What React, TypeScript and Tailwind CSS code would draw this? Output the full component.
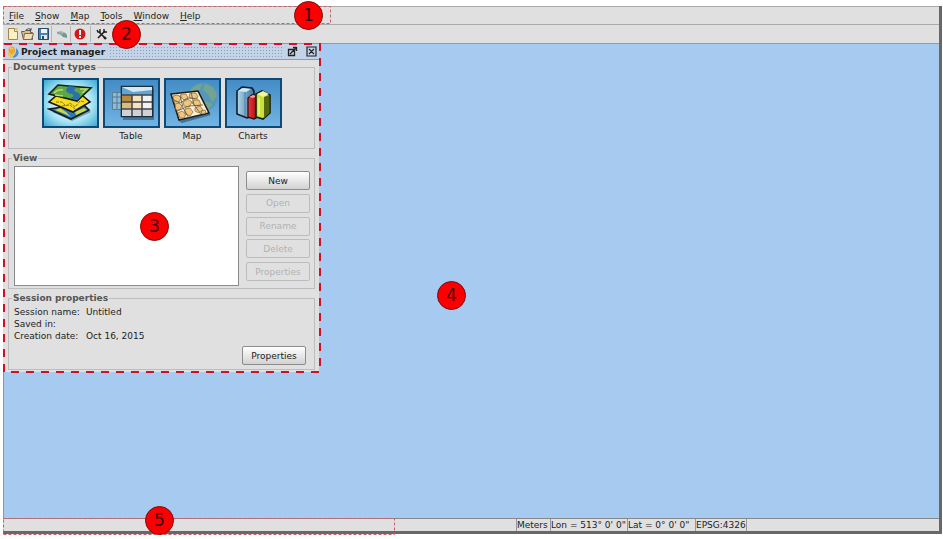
import React from 'react';

const menus = ['File', 'Show', 'Map', 'Tools', 'Window', 'Help'];

const viewActions = [
    { label: 'New', enabled: true },
    { label: 'Open', enabled: false },
    { label: 'Rename', enabled: false },
    { label: 'Delete', enabled: false },
    { label: 'Properties', enabled: false },
];

const Marker = ({ n, className }: { n: number; className: string }) => (
    <span className={`absolute z-20 flex size-[29px] items-center justify-center rounded-full border border-[#7a0c0c] bg-[#fb0000] text-[17px] leading-none text-[#3a0505] ${className}`}>
        {n}
    </span>
);

const DashedOutline = ({ thick = false }: { thick?: boolean }) => (
    <svg className="pointer-events-none absolute inset-0 z-10 h-full w-full overflow-visible" aria-hidden="true">
        <rect
            x={thick ? 1 : 0.5}
            y={thick ? 0 : 0.5}
            width="100%"
            height="100%"
            fill="none"
            stroke={thick ? '#d01028' : '#c8606a'}
            strokeWidth={thick ? 2 : 1}
            strokeDasharray={thick ? '8 7' : '3 2'}
        />
    </svg>
);

const NewIcon = () => (
    <svg width="12" height="12" viewBox="0 0 12 12">
        <path d="M1.500 .5h6l3 3v8h-9z" fill="#fdf0c4" stroke="#a08648" />
        <path d="M7.500 .5v3h3" fill="#fff" stroke="#a08648" />
        <path d="M8 0h3v2H8z" fill="#f5c64a" />
    </svg>
);

const OpenIcon = () => (
    <svg width="13" height="12" viewBox="0 0 13 12">
        <path d="M.5 3.500h3l1-1h5v2h2v7h-9z" fill="#d9bd92" stroke="#6f5c45" />
        <path d="M3.500 5.500h9l-2 6h-8z" fill="#f3ddb4" stroke="#7d6a50" />
        <path d="M5 2q3-3 5 0M10 0v2.500H8" fill="none" stroke="#3f4d5e" />
    </svg>
);

const SaveIcon = () => (
    <svg width="12" height="12" viewBox="0 0 12 12">
        <path d="M1.500 .5h10v11h-10z" fill="#4583ad" stroke="#27496c" />
        <path d="M4 1h6v4H4z" fill="#eef3f8" />
        <path d="M4 7h6v4H4z" fill="#e4e8ec" />
        <path d="M5 8h2v3H5z" fill="#27496c" />
    </svg>
);

const LinkIcon = () => (
    <svg width="12" height="12" viewBox="0 0 12 12">
        <path d="M1 4l4-1 5 2-1 3-4-1-4-1z" fill="#a3b6b4" />
        <path d="M5 7l4-2 2 2v3L7 9z" fill="#6f9a89" />
        <path d="M1 4l4 2 5 0" fill="none" stroke="#8098a0" />
    </svg>
);

const AlertIcon = () => (
    <svg width="12" height="12" viewBox="0 0 12 12">
        <circle cx="6" cy="6" r="5.500" fill="#d41818" />
        <path d="M5 2h2v5H5zM5 8h2v2H5z" fill="#fff" />
    </svg>
);

const ToolsIcon = () => (
    <svg width="12" height="12" viewBox="0 0 12 12" fill="none" stroke="#1c1c1c">
        <path d="M3 4l6 6M9 3L2 10" strokeWidth="1.600" />
        <path d="M1 2l1 2h2V1M8 1v3h3" strokeWidth="1.400" />
        <path d="M8 9l2 2" strokeWidth="2.400" />
    </svg>
);

const LogoIcon = () => (
    <svg width="13" height="13" viewBox="0 0 13 13">
        <path d="M2 3q4-4 6 1 1 4-3 6Q0 8 2 3z" fill="#f4a62a" />
        <path d="M9 3q4 3 2 7-3 4-6 2 5-3 4-9z" fill="#4b94d0" />
        <path d="M1 7q2 4 6 2-1 4-4 3T1 7z" fill="#f6c638" />
        <path d="M3 4q2-2 3 0" fill="none" stroke="#fbd77c" />
    </svg>
);

const ViewIcon = () => (
    <svg width="46" height="38" viewBox="0 0 46 38">
        <path d="M5 28l20 9 19-9-4-3z" fill="#0d3442" opacity=".4" />
        <path d="M2 25l22 10 18-9-6-6z" fill="#2878bf" stroke="#111c24" strokeWidth="1.600" />
        <path d="M8 26l5-2 6 4 5 5-6-3zM28 28l9-4 3 2-11 5z" fill="#d2d83c" />
        <path d="M2 18l24 10 17-10-7-6-26-1z" fill="#f7de20" stroke="#17170f" strokeWidth="1.600" />
        <path d="M9 18l6 0 4 4 4-3 5 4 5-6 5 1M15 22l8-1 5 4" fill="none" stroke="#8f7618" strokeDasharray="3 1" />
        <path d="M2 10L11 1l33 3-14 13z" fill="#5ba845" stroke="#122015" strokeWidth="1.600" />
        <path d="M22 2l8 1q-5 3-1 5 6 1 3 7l-3 1-6-2q6-2 2-4-10-2-3-8z" fill="#2a6fae" />
        <path d="M7 9q4-4 9-3M8 11l8 1M33 5l7 0-5 4" fill="none" stroke="#c3d66c" strokeWidth="1.500" />
    </svg>
);

const TableIcon = () => (
    <svg width="45" height="38" viewBox="0 0 45 38">
        <path d="M3.500 8.500h14v17h-14z" fill="#8ebbd5" stroke="#587e98" />
        <path d="M3 13h14M3 19h14M8 8v17" stroke="#537993" />
        <path d="M14 5h31v31H14z" fill="#18324a" opacity=".45" />
        <path d="M12.500 2.500h31v30h-31z" fill="#f2f2f2" stroke="#1e2c38" strokeWidth="1.600" />
        <path d="M13 3h30v8H13z" fill="#5fa6d2" />
        <path d="M13 3h30v3L24 8z" fill="#d4e9f3" />
        <path d="M13 11h10v7H13z" fill="#b88c3c" />
        <path d="M13 18h10v7H13z" fill="#d8bd7b" />
        <path d="M23 11h10v14H23z" fill="#f3e4bc" />
        <path d="M13 25h30v7H13z" fill="#cfd0d8" />
        <path d="M13 11h30M13 18h30M13 25h30M23 11v21M33 11v21" stroke="#45424a" strokeWidth="1.500" />
    </svg>
);

const MapIcon = () => (
    <svg width="51" height="42" viewBox="0 0 51 42">
        <circle cx="36" cy="15" r="14.500" fill="#5597bf" />
        <path d="M23 8q6-7 12-6l-2 6-6 3zM38 2q10 2 12 12l-5 6-4-8-5-4zM38 19l8 3-5 6-4-3z" fill="#73a48f" />
        <path d="M12 39l30-8 2 2-29 8z" fill="#12374d" opacity=".5" />
        <path d="M4 12l27-3 11 22-30 7z" fill="#fbf0d6" stroke="#211c14" strokeWidth="1.600" />
        <g fill="#efc67c" stroke="#8c7043" strokeWidth=".8">
            <path d="M6 14l5-1 3 3-2 4-5 0zM14 12l5 0 2 4-4 2-3-3zM23 11l6 0 2 4-4 2-5-2zM8 22l4-1 3 3-2 4-4 0zM16 20l5-3 4 3-3 5-5-1zM27 18l5 0 2 5-5 1-4-3zM11 31l4-2 4 3-2 4-4 0zM18 27l5-1 3 4-3 4-5-2zM28 26l5-2 3 4-4 3-4-2zM34 29l4-1 1 3-4 1z" />
        </g>
        <path d="M5 17l8 4 8-5 10 1M13 13l3 13 6 10M10 29l12-5 14-1M24 10l3 13 7 9" fill="none" stroke="#5f5340" strokeWidth=".8" />
    </svg>
);

const ChartsIcon = () => (
    <svg width="36" height="36" viewBox="0 0 36 36">
        <defs>
            <linearGradient id="steel">
                <stop offset="0" stopColor="#b4d6ea" />
                <stop offset="1" stopColor="#38729f" />
            </linearGradient>
            <linearGradient id="ruby">
                <stop offset="0" stopColor="#ef3a3a" />
                <stop offset="1" stopColor="#930a10" />
            </linearGradient>
        </defs>
        <path d="M2 6l5-4 10 1 2 3v25l-7 2-10-4z" fill="url(#steel)" stroke="#101c28" strokeWidth="1.600" />
        <path d="M3 6l5-3 8 1-5 3z" fill="#d3e8f3" />
        <path d="M10 7v24" stroke="#4e86ae" />
        <path d="M13 13l4-3 6 1v21l-4 2-6-2z" fill="url(#ruby)" stroke="#2c0507" strokeWidth="1.200" />
        <path d="M14 12l4-2 4 1-4 2z" fill="#f4a09a" />
        <path d="M21 9l6-3 8 4v18l-7 6-7-2z" fill="#c9e233" stroke="#171d08" strokeWidth="1.600" />
        <path d="M29 12l5-2v18l-5 5z" fill="#56660f" />
        <path d="M22 9l6-3 6 3-6 3z" fill="#eff5a4" />
        <path d="M24 13v17" stroke="#e4f27e" strokeWidth="2" />
    </svg>
);

const documentTypes = [
    { label: 'View', icon: <ViewIcon />, selected: true },
    { label: 'Table', icon: <TableIcon />, selected: false },
    { label: 'Map', icon: <MapIcon />, selected: false },
    { label: 'Charts', icon: <ChartsIcon />, selected: false },
];

const PushButton = ({ label, enabled = true }: { label: string; enabled?: boolean }) => (
    <button
        disabled={!enabled}
        className="h-[19px] w-16 rounded-[2px] border border-[#8c8c8c] bg-linear-to-b from-white to-[#d2d2d2] text-[9px] leading-3 text-[#222] disabled:border-[#bcbcbc] disabled:bg-[#e0e0e0] disabled:bg-none disabled:text-[#b2b2b2]"
    >
        {label}
    </button>
);

const Group = ({ title, children }: { title: string; children: React.ReactNode }) => (
    <fieldset className="border border-[#bdbdbd]">
        <legend className="ml-[3px] px-px text-[9px] leading-3 font-bold text-[#555]">{title}</legend>
        {children}
    </fieldset>
);

const ProjectManager = () => (
    <section className="relative w-[316px] bg-[#e0e0e0] pr-1 pb-[2px] pl-[5px]">
        <DashedOutline thick />
        <header className="-mr-1 -ml-[5px] flex h-4 items-center border-b border-[#9a9a9a] bg-[#c3d4e8] pr-[2px] pl-1">
            <LogoIcon />
            <h1 className="ml-px text-[9px] leading-3 font-bold text-[#1c1c1c]">Project manager</h1>
            <div className="mx-1 h-[11px] flex-1 bg-[radial-gradient(#8da0b5_1px,transparent_1px)] bg-size-[3px_3px]" />
            <button aria-label="Maximize" className="mr-2">
                <svg width="11" height="11" viewBox="0 0 11 11" fill="none" stroke="#222">
                    <path d="M1.500 3.500h6v6h-6zM3 8l6-6M6 1.500h3.500V5" strokeWidth="1.300" />
                </svg>
            </button>
            <button aria-label="Close">
                <svg width="11" height="11" viewBox="0 0 11 11" fill="none" stroke="#222">
                    <path d="M1 1h9v9H1zM3 3l5 5M8 3L3 8" strokeWidth="1.200" />
                </svg>
            </button>
        </header>

        <div className="flex flex-col gap-[3px] pt-px">
            <Group title="Document types">
                <div className="flex justify-center gap-1 pt-[5px] pb-[6px]">
                    {documentTypes.map((doc) => (
                        <button key={doc.label} className="flex flex-col items-center gap-[2px] text-[9px] leading-3 text-[#222]">
                            <span
                                className={`flex h-[50px] w-[57px] items-center justify-center border-2 border-[#0e4a78] ${
                                    doc.selected
                                        ? 'bg-[radial-gradient(#effcff_30%,#a4e2f4_60%,#38a8d4)]'
                                        : 'bg-linear-to-b from-[#438cc5] to-[#72b4e4]'
                                }`}
                            >
                                {doc.icon}
                            </span>
                            {doc.label}
                        </button>
                    ))}
                </div>
            </Group>

            <Group title="View">
                <div className="flex gap-[7px] pt-[2px] pr-1 pb-[2px] pl-[5px]">
                    <select multiple aria-label="Views" className="h-[120px] flex-1 appearance-none border border-[#8a8a8a] bg-white" />
                    <div className="flex flex-col justify-between py-[5px]">
                        {viewActions.map((action) => (
                            <PushButton key={action.label} label={action.label} enabled={action.enabled} />
                        ))}
                    </div>
                </div>
            </Group>

            <Group title="Session properties">
                <div className="px-[5px] pt-[2px] pb-1">
                    <dl className="grid grid-cols-[72px_1fr] text-[9px] leading-3 text-[#222]">
                        <dt>Session name:</dt>
                        <dd>Untitled</dd>
                        <dt>Saved in:</dt>
                        <dd></dd>
                        <dt>Creation date:</dt>
                        <dd>Oct 16, 2015</dd>
                    </dl>
                    <div className="mt-1 flex justify-end pr-[3px]">
                        <PushButton label="Properties" />
                    </div>
                </div>
            </Group>
        </div>
    </section>
);

const toolButton = 'flex h-4 w-[15px] items-center justify-center';

const App = () => {
    return (
        <div className="flex h-screen flex-col bg-white pt-[6px] pr-[1px] pb-[5px] pl-[3px] font-['DejaVu_Sans',sans-serif]">
            <div className="flex min-h-0 flex-1 flex-col border-r-[3px] border-b-[3px] border-[#686868] bg-[#e0e0e0]">
                <nav className="relative flex h-[19px] items-center gap-[11px] border-t border-b border-[#aaa] pl-[6px] text-[9px] leading-3 text-[#222]">
                    {menus.map((menu) => (
                        <button key={menu}>
                            <span className="underline">{menu[0]}</span>
                            {menu.slice(1)}
                        </button>
                    ))}
                    <div className="absolute -top-px left-0 h-[17px] w-[327px]">
                        <DashedOutline />
                    </div>
                    <Marker n={1} className="-top-[6px] left-[291px]" />
                </nav>

                <div className="relative flex h-[19px] items-center border-b border-[#999] pl-[2px]">
                    <button aria-label="New project" className={toolButton}><NewIcon /></button>
                    <button aria-label="Open project" className={toolButton}><OpenIcon /></button>
                    <button aria-label="Save project" className={toolButton}><SaveIcon /></button>
                    <div className="ml-px flex border-l border-[#b5b5b5] pl-[2px]">
                        <button aria-label="Connections" className={toolButton}><LinkIcon /></button>
                    </div>
                    <div className="ml-px flex border-l border-[#b5b5b5] pl-px">
                        <button aria-label="Show errors" className={toolButton}><AlertIcon /></button>
                    </div>
                    <div className="ml-[3px] flex border-l border-[#b5b5b5] pl-[3px]">
                        <button aria-label="Preferences" className={toolButton}><ToolsIcon /></button>
                    </div>
                    <Marker n={2} className="top-[-5px] left-[109px]" />
                </div>

                <main className="relative min-h-0 flex-1 border-l border-[#8a97a6] bg-[#a7caf0]">
                    <div className="relative -ml-px w-fit">
                        <ProjectManager />
                        <Marker n={3} className="top-[168px] left-[137px]" />
                    </div>
                    <Marker n={4} className="top-[50%] left-[433px]" />
                </main>

                <footer className="relative flex h-[13px] justify-end gap-px border-t border-[#888] pr-48 text-[9px] leading-[13px] text-[#222]">
                    <span className="w-[33px] border-l border-[#999] whitespace-nowrap">Meters</span>
                    <span className="w-[76px] border-l border-[#999] whitespace-nowrap">Lon = 513° 0' 0"</span>
                    <span className="w-[67px] border-l border-[#999] whitespace-nowrap">Lat = 0° 0' 0"</span>
                    <span className="w-[52px] border-x border-[#999] whitespace-nowrap">EPSG:4326</span>
                    <div className="absolute -top-px left-0 h-4 w-[391px]">
                        <DashedOutline />
                    </div>
                    <Marker n={5} className="-top-[13px] left-[142px]" />
                </footer>
            </div>
        </div>
    );
};

export default App;
